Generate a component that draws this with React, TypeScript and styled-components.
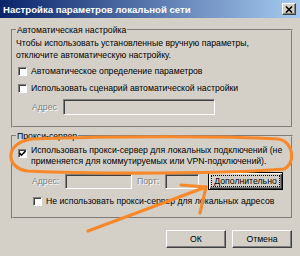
import React from "react";
import styled, { createGlobalStyle, css } from "styled-components";

const Global = createGlobalStyle`
  html, body { margin: 0; padding: 0; background: #d4d0c8; }
  body { font-family: "Liberation Sans", Arial, sans-serif; font-size: 8.7px; color: #000; }
  * { box-sizing: border-box; }
`;

const Window = styled.div`
  position: relative;
  width: 300px;
  height: 256px;
  background: #d4d0c8;
  display: flex;
  flex-direction: column;
  overflow: hidden;
`;

const TitleBar = styled.div`
  flex: none;
  height: 18px;
  display: flex;
  align-items: center;
  justify-content: space-between;
  padding: 0 4px 0 3px;
  background: linear-gradient(to right, #0a246a, #a6caf0);
`;

const Title = styled.span`
  color: #fff;
  font-weight: bold;
  font-size: 9.6px;
  white-space: nowrap;
`;

const CloseButton = styled.div`
  width: 14px;
  height: 12px;
  background: #d4d0c8;
  border: 1px solid;
  border-color: #fff #404040 #404040 #fff;
  box-shadow: inset -1px -1px #808080;
  display: flex;
  align-items: center;
  justify-content: center;
`;

const Body = styled.div`
  flex: 1;
  display: flex;
  flex-direction: column;
  padding: 6px 7px 0 11px;
`;

const Group = styled.fieldset<{ $gap: number; $pt: number; $pb: number; $mt?: number }>`
  margin: ${(p) => p.$mt ?? 0}px 0 0 0;
  min-width: 0;
  border: 2px groove #d4d0c8;
  padding: ${(p) => p.$pt}px 4px ${(p) => p.$pb}px 3px;
  display: flex;
  flex-direction: column;
  gap: ${(p) => p.$gap}px;
`;

const Legend = styled.legend`
  padding: 0 1px;
  line-height: 12px;
`;

const Text = styled.div`
  line-height: 12px;
  white-space: nowrap;
`;

const Row = styled.div<{ $indent: number; $align?: string }>`
  display: flex;
  align-items: ${(p) => p.$align ?? "center"};
  padding-left: ${(p) => p.$indent}px;
  white-space: nowrap;
`;

const Box = styled.span<{ $mt?: number }>`
  flex: none;
  width: 9px;
  height: 9px;
  margin-top: ${(p) => p.$mt ?? 0}px;
  margin-right: 4px;
  background: #fff;
  border: 1px solid;
  border-color: #808080 #fff #fff #808080;
  box-shadow: inset 1px 1px #404040;
  display: flex;
  align-items: center;
  justify-content: center;
`;

const Label = styled.span<{ $lh?: number }>`
  line-height: ${(p) => p.$lh ?? 13}px;
`;

const Disabled = styled.span<{ $w: number; $ml?: number }>`
  flex: none;
  width: ${(p) => p.$w}px;
  margin-left: ${(p) => p.$ml ?? 0}px;
  color: #808080;
  text-shadow: 1px 1px #fff;
  line-height: 13px;
`;

const Field = styled.span<{ $w: number; $h: number }>`
  flex: none;
  width: ${(p) => p.$w}px;
  height: ${(p) => p.$h}px;
  background: #d4d0c8;
  border: 1px solid;
  border-color: #808080 #fff #fff #808080;
  box-shadow: inset 1px 1px #404040;
`;

const Button = styled.button<{ $w: number; $default?: boolean; $ml?: number }>`
  flex: none;
  font: inherit;
  color: #000;
  width: ${(p) => p.$w}px;
  height: 18px;
  margin: 0 0 0 ${(p) => p.$ml ?? 0}px;
  padding: 0;
  background: #d4d0c8;
  display: flex;
  align-items: center;
  justify-content: center;
  border: 1px solid;
  border-color: #fff #404040 #404040 #fff;
  box-shadow: inset -1px -1px #808080;
  ${(p) =>
    p.$default &&
    css`
      border-color: #000;
      box-shadow: inset 1px 1px #fff, inset -1px -1px #404040, inset -2px -2px #808080;
    `}
`;

const Focus = styled.span`
  border: 1px dotted #000;
  padding: 0 2px;
  line-height: 10px;
`;

const Footer = styled.div`
  display: flex;
  justify-content: flex-end;
  gap: 6px;
  margin-top: 11px;
  padding-right: 1px;
`;

const Overlay = styled.svg`
  position: absolute;
  left: 0;
  top: 0;
  pointer-events: none;
`;

const Check = () => (
  <svg width="7" height="7" viewBox="0 0 7 7">
    <path d="M0.5 3 L2.5 5.2 L6.5 1" fill="none" stroke="#000" strokeWidth="1.6" />
  </svg>
);

const CheckBox = ({ checked, mt }: { checked?: boolean; mt?: number }) => (
  <Box $mt={mt}>{checked && <Check />}</Box>
);

export default function App() {
  return (
    <>
      <Global />
      <Window>
        <TitleBar>
          <Title>Настройка параметров локальной сети</Title>
          <CloseButton>
            <svg width="8" height="7" viewBox="0 0 8 7">
              <path d="M1 0.5 L7 6.5 M7 0.5 L1 6.5" stroke="#000" strokeWidth="1.6" />
            </svg>
          </CloseButton>
        </TitleBar>
        <Body>
          <Group $gap={4} $pt={1} $pb={11}>
            <Legend>Автоматическая настройка</Legend>
            <Text>
              Чтобы использовать установленные вручную параметры,
              <br />
              отключите автоматическую настройку.
            </Text>
            <Row $indent={2}>
              <CheckBox />
              <Label>Автоматическое определение параметров</Label>
            </Row>
            <Row $indent={2}>
              <CheckBox />
              <Label>Использовать сценарий автоматической настройки</Label>
            </Row>
            <Row $indent={16}>
              <Disabled $w={31}>Адрес</Disabled>
              <Field $w={152} $h={16} />
            </Row>
          </Group>
          <Group $gap={5} $pt={3} $pb={9} $mt={2}>
            <Legend>Прокси-сервер</Legend>
            <Row $indent={2} $align="flex-start">
              <CheckBox checked mt={4} />
              <Label $lh={11}>
                Использовать прокси-сервер для локальных подключений (не
                <br />
                применяется для коммутируемых или VPN-подключений).
              </Label>
            </Row>
            <Row $indent={16}>
              <Disabled $w={33}>Адрес:</Disabled>
              <Field $w={67} $h={15} />
              <Disabled $w={28} $ml={5}>Порт:</Disabled>
              <Field $w={34} $h={15} />
              <Button $w={75} $default $ml={9}>
                <Focus>Дополнительно</Focus>
              </Button>
            </Row>
            <Row $indent={17}>
              <CheckBox />
              <Label>Не использовать прокси-сервер для локальных адресов</Label>
            </Row>
          </Group>
          <Footer>
            <Button $w={60}>ОК</Button>
            <Button $w={60}>Отмена</Button>
          </Footer>
        </Body>
        <Overlay width="300" height="256" viewBox="0 0 300 256">
          <g fill="none" stroke="#f7892b" strokeWidth="3.2" strokeLinecap="round" strokeLinejoin="round">
            <path d="M32 139 C110 136 230 136 278 139 C294 141 296 164 284 169 C230 174 90 174 28 171 C6 169 3 143 32 139 Z" />
            <path d="M88 231 L206 187" />
            <path d="M181 185 L206 187 L200 213" />
          </g>
        </Overlay>
      </Window>
    </>
  );
}
